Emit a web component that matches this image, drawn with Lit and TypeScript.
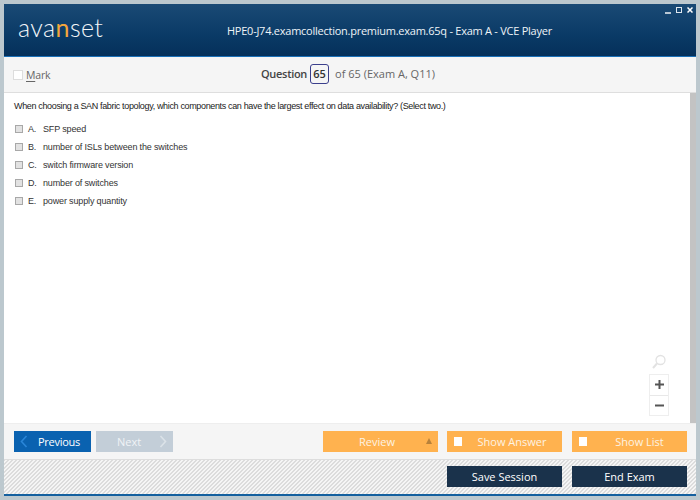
import { LitElement, html, css } from "lit";
import { customElement } from "lit/decorators.js";

@customElement("app-root")
export class AppRoot extends LitElement {
  static styles = css`
    :host { display: block; width: 700px; height: 500px; box-sizing: border-box; padding: 4px 4px 0; background: #bcc8ce; font-family: "Open Sans", sans-serif; overflow: hidden; }
    .win { display: flex; flex-direction: column; height: 492px; background: #fff; position: relative; }
    .head { height: 53px; flex: none; box-sizing: border-box; border-bottom: 1px solid #1a70b8; background: linear-gradient(#1a4a75, #0a3a66 60%, #05305a); display: flex; align-items: center; position: relative; color: #fff; }
    .logo { position: absolute; left: 14px; top: 9px; font: 300 25px/28px "Lato", sans-serif; letter-spacing: 0.4px; color: #f2f5f8; }
    .logo span { color: #f2a63c; font-weight: 400; }
    .title { padding-left: 223px; font-size: 11px; letter-spacing: -0.25px; line-height: 16px; margin-top: 1px; color: #eef3f7; white-space: nowrap; }
    .wc { position: absolute; right: 3px; top: 3px; display: flex; gap: 5px; align-items: flex-start; }
    .bar { height: 36px; flex: none; box-sizing: border-box; background: #f5f5f5; border-bottom: 1px solid #dedede; display: flex; align-items: center; position: relative; }
    .mark { display: flex; align-items: center; gap: 3px; padding-left: 9px; color: #666; font-size: 10.5px; letter-spacing: -0.2px; }
    .mark i { width: 8px; height: 8px; background: #fff; border: 1px solid #ddd; }
    .mark u { text-underline-offset: 2px; }
    .q { position: absolute; left: 257px; top: 7px; display: flex; align-items: center; color: #666; font-size: 11px; line-height: 20px; }
    .q b { font-weight: 600; color: #444; letter-spacing: -0.3px; }
    .q em { font-style: normal; font-weight: 600; width: 19px; height: 20px; box-sizing: border-box; margin: 0 6px 0 3px; border: 1px solid #3b3f8c; border-radius: 3px; text-align: center; color: #333; line-height: 18px; font-size: 11px; }
    .body { flex: 1; position: relative; padding: 7px 10px; font: 9px/12px "Liberation Sans", sans-serif; color: #222; }
    .ask { letter-spacing: -0.35px; white-space: nowrap; }
    .sb { position: absolute; right: 0; top: 0; bottom: 0; width: 6px; background: #c3c3c3; }
    .opts { display: flex; flex-direction: column; gap: 6px; margin-top: 11px; }
    .opt { display: flex; align-items: center; height: 12px; color: #333; letter-spacing: -0.15px; }
    .opt i { width: 6px; height: 6px; border: 1px solid #a8a8a8; background: #e2e2e2; margin: 0 5px 0 1px; flex: none; }
    .opt s { text-decoration: none; width: 15px; flex: none; }
    .zoom { position: absolute; right: 27px; top: 261px; width: 20px; display: flex; flex-direction: column; align-items: center; }
    .zb { width: 20px; height: 42px; box-sizing: border-box; margin-top: 4px; border: 1px solid #eee; display: flex; flex-direction: column; align-items: center; justify-content: space-around; }
    .zb div { height: 20px; display: flex; align-items: center; justify-content: center; width: 100%; }
    .zb div + div { border-top: 1px solid #e8e8e8; }
    .nav { height: 36px; flex: none; box-sizing: border-box; background: #f5f5f5; border-top: 1px solid #eee; display: flex; align-items: center; padding: 0 9px 0 10px; color: #fff; font-size: 11px; }
    .btn { height: 21px; display: flex; align-items: center; justify-content: center; position: relative; box-sizing: border-box; }
    .prev { width: 77px; background: #0a62b0; padding-left: 13px; letter-spacing: -0.25px; }
    .next { width: 77px; background: #c3ced8; margin-left: 5px; color: #f0f3f6; padding-right: 11px; }
    .prev svg { position: absolute; left: 6px; top: 4px; }
    .next svg { position: absolute; right: 6px; top: 4px; }
    .org { background: #ffb24f; color: #fdf3e3; }
    .rev { width: 115px; margin-left: auto; padding-right: 7px; }
    .rev::after { content: ""; position: absolute; right: 6px; top: 7px; border: 3.5px solid transparent; border-top: 0; border-bottom: 6px solid #b8813a; }
    .ans { width: 115px; margin-left: 9px; padding-left: 15px; }
    .lst { width: 115px; margin-left: 10px; padding-left: 20px; }
    .ck { position: absolute; left: 7px; top: 6px; width: 8px; height: 9px; background: #fff; }
    .foot { height: 35px; flex: none; box-sizing: border-box; border-top: 1px solid #ddd; background: repeating-linear-gradient(135deg, #dcdcdc 0 1px, #f5f5f5 1px 2.828px); display: flex; justify-content: flex-end; align-items: center; gap: 10px; padding: 0 9px 1px 0; color: #fff; font-size: 11px; }
    .dk { width: 115px; height: 21px; background: #1a324b; display: flex; align-items: center; justify-content: center; }
    .line { height: 2px; flex: none; background: #14609f; }
  `;

  render() {
    const opts = [["A.", "SFP speed"], ["B.", "number of ISLs between the switches"], ["C.", "switch firmware version"], ["D.", "number of switches"], ["E.", "power supply quantity"]];
    return html`<div class="win">
      <div class="head">
        <div class="logo">ava<span>n</span>set</div>
        <div class="title">HPE0-J74.examcollection.premium.exam.65q - Exam A - VCE Player</div>
        <div class="wc">
          <svg width="6" height="7"><path d="M0 6h6" stroke="#fff" stroke-width="1.400"/></svg>
          <svg width="6" height="6"><rect x=".5" y=".5" width="5" height="5" fill="none" stroke="#dfe8f0"/></svg>
          <svg width="6" height="6"><path d="M.5.5l5 5M5.500.5l-5 5" stroke="#fff" stroke-width="1.500"/></svg>
        </div>
      </div>
      <div class="bar">
        <div class="mark"><i></i><span><u>M</u>ark</span></div>
        <div class="q"><b>Question</b><em>65</em><span>of 65 (Exam A, Q11)</span></div>
      </div>
      <div class="body">
        <div class="sb"></div>
        <div class="ask">When choosing a SAN fabric topology, which components can have the largest effect on data availability? (Select two.)</div>
        <div class="opts">
          ${opts.map(([k, t]) => html`<div class="opt"><i></i><s>${k}</s><span>${t}</span></div>`)}
        </div>
        <div class="zoom">
          <svg width="16" height="16" viewBox="0 0 16 16"><circle cx="9.500" cy="6" r="4.500" fill="none" stroke="#e2e2e2" stroke-width="1.300"/><path d="M6 9.500L2 14" stroke="#e2e2e2" stroke-width="2"/></svg>
          <div class="zb">
            <div><svg width="9" height="9"><path d="M4.500 0v9M0 4.500h9" stroke="#555" stroke-width="2"/></svg></div>
            <div><svg width="9" height="9"><path d="M0 4.500h9" stroke="#555" stroke-width="2"/></svg></div>
          </div>
        </div>
      </div>
      <div class="nav">
        <div class="btn prev"><svg width="8" height="13"><path d="M6.500 1L1.500 6.500l5 5.500" fill="none" stroke="#2a86d8" stroke-width="1.600"/></svg>Previous</div>
        <div class="btn next">Next<svg width="8" height="13"><path d="M1.500 1l5 5.500-5 5.500" fill="none" stroke="#dbe2e8" stroke-width="1.600"/></svg></div>
        <div class="btn org rev">Review</div>
        <div class="btn org ans"><i class="ck"></i>Show Answer</div>
        <div class="btn org lst"><i class="ck"></i>Show List</div>
      </div>
      <div class="foot">
        <div class="dk">Save Session</div>
        <div class="dk">End Exam</div>
      </div>
      <div class="line"></div>
    </div>`;
  }
}
